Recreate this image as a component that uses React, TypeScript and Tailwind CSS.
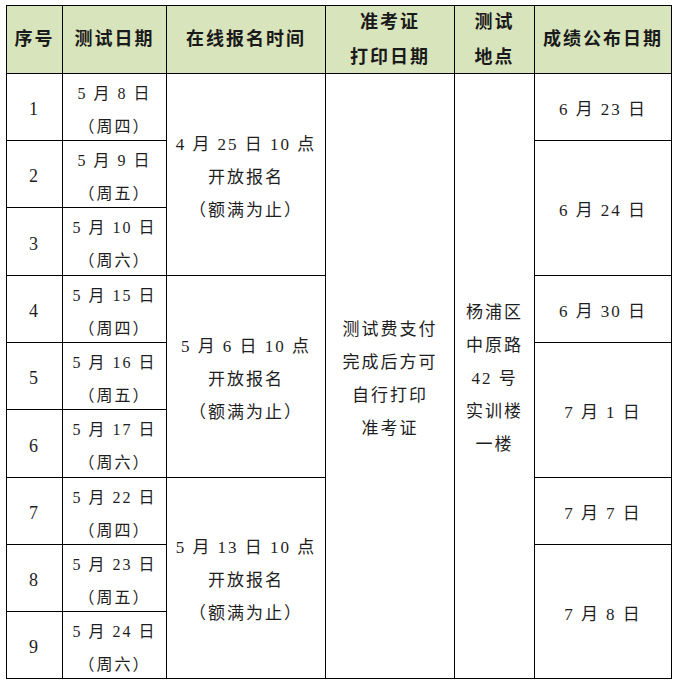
import React from 'react';

const font = { fontFamily: '"Liberation Serif", "Noto Sans CJK SC", serif' };

const dates = [
  ['5 月 8 日', '（周四）'],
  ['5 月 9 日', '（周五）'],
  ['5 月 10 日', '（周六）'],
  ['5 月 15 日', '（周四）'],
  ['5 月 16 日', '（周五）'],
  ['5 月 17 日', '（周六）'],
  ['5 月 22 日', '（周四）'],
  ['5 月 23 日', '（周五）'],
  ['5 月 24 日', '（周六）'],
];

const Cell: React.FC<{ className?: string; lines: string[]; head?: boolean }> = ({ className = '', lines, head }) => (
  <div
    className={`flex flex-col items-center justify-center text-center ${
      head ? 'bg-[#d8e4bc] font-bold text-[18px] leading-[35px] text-[#1a1a1a]' : 'bg-white pt-[5px] leading-[33px] text-[#1e1e1e]'
    } tracking-[2px] ${className}`}
  >
    {lines.map((l, i) => (
      <span key={i} className="whitespace-pre">{l}</span>
    ))}
  </div>
);

export default function App() {
  return (
    <div className="w-[677px] h-[684px] bg-white pt-[5px] pl-[6px]" style={font}>
      <div className="grid w-max bg-black gap-px p-px grid-cols-[55px_103px_158px_128px_79px_136px] grid-rows-[67px_66px_66px_67px_66px_66px_67px_66px_66px_66px]">
        <Cell head lines={['序号']} />
        <Cell head lines={['测试日期']} />
        <Cell head lines={['在线报名时间']} />
        <Cell head lines={['准考证', '打印日期']} />
        <Cell head lines={['测试', '地点']} />
        <Cell head lines={['成绩公布日期']} />

        {dates.map((d, i) => (
          <React.Fragment key={i}>
            <Cell className="col-start-1 text-[18px]" lines={[String(i + 1)]} />
            <Cell className="col-start-2 text-[16px]" lines={d} />
          </React.Fragment>
        ))}

        <Cell className="col-start-3 row-start-2 row-span-3 text-[17px]" lines={['4 月 25 日 10 点', '开放报名', '（额满为止）']} />
        <Cell className="col-start-3 row-start-5 row-span-3 text-[17px]" lines={['5 月 6 日 10 点', '开放报名', '（额满为止）']} />
        <Cell className="col-start-3 row-start-8 row-span-3 text-[17px]" lines={['5 月 13 日 10 点', '开放报名', '（额满为止）']} />

        <Cell className="col-start-4 row-start-2 row-span-9 text-[17px]" lines={['测试费支付', '完成后方可', '自行打印', '准考证']} />
        <Cell className="col-start-5 row-start-2 row-span-9 text-[17px]" lines={['杨浦区', '中原路', '42 号', '实训楼', '一楼']} />

        <Cell className="col-start-6 row-start-2 text-[17px]" lines={['6 月 23 日']} />
        <Cell className="col-start-6 row-start-3 row-span-2 text-[17px]" lines={['6 月 24 日']} />
        <Cell className="col-start-6 row-start-5 text-[17px]" lines={['6 月 30 日']} />
        <Cell className="col-start-6 row-start-6 row-span-2 text-[17px]" lines={['7 月 1 日']} />
        <Cell className="col-start-6 row-start-8 text-[17px]" lines={['7 月 7 日']} />
        <Cell className="col-start-6 row-start-9 row-span-2 text-[17px]" lines={['7 月 8 日']} />
      </div>
    </div>
  );
}
